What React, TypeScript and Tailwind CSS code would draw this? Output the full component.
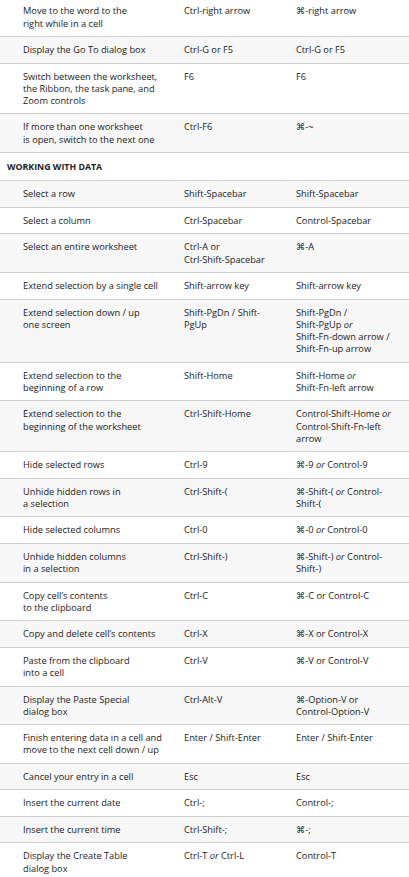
import React from 'react';

type Row = { a: string[]; b: string[]; c: string[] };

// rows of the shortcut table; "*or*" is printed in italics
const topRows: Row[] = [
  { a: ['Move to the word to the', 'right while in a cell'], b: ['Ctrl-right arrow'], c: ['⌘-right arrow'] },
  { a: ['Display the Go To dialog box'], b: ['Ctrl-G or F5'], c: ['Ctrl-G or F5'] },
  { a: ['Switch between the worksheet,', 'the Ribbon, the task pane, and', 'Zoom controls'], b: ['F6'], c: ['F6'] },
  { a: ['If more than one worksheet', 'is open, switch to the next one'], b: ['Ctrl-F6'], c: ['⌘-~'] },
];

const dataRows: Row[] = [
  { a: ['Select a row'], b: ['Shift-Spacebar'], c: ['Shift-Spacebar'] },
  { a: ['Select a column'], b: ['Ctrl-Spacebar'], c: ['Control-Spacebar'] },
  { a: ['Select an entire worksheet'], b: ['Ctrl-A or', 'Ctrl-Shift-Spacebar'], c: ['⌘-A'] },
  { a: ['Extend selection by a single cell'], b: ['Shift-arrow key'], c: ['Shift-arrow key'] },
  {
    a: ['Extend selection down / up', 'one screen'],
    b: ['Shift-PgDn / Shift-', 'PgUp'],
    c: ['Shift-PgDn /', 'Shift-PgUp *or*', 'Shift-Fn-down arrow /', 'Shift-Fn-up arrow'],
  },
  { a: ['Extend selection to the', 'beginning of a row'], b: ['Shift-Home'], c: ['Shift-Home *or*', 'Shift-Fn-left arrow'] },
  {
    a: ['Extend selection to the', 'beginning of the worksheet'],
    b: ['Ctrl-Shift-Home'],
    c: ['Control-Shift-Home *or*', 'Control-Shift-Fn-left', 'arrow'],
  },
  { a: ['Hide selected rows'], b: ['Ctrl-9'], c: ['⌘-9 *or* Control-9'] },
  { a: ['Unhide hidden rows in', 'a selection'], b: ['Ctrl-Shift-('], c: ['⌘-Shift-( *or* Control-', 'Shift-('] },
  { a: ['Hide selected columns'], b: ['Ctrl-0'], c: ['⌘-0 *or* Control-0'] },
  { a: ['Unhide hidden columns', 'in a selection'], b: ['Ctrl-Shift-)'], c: ['⌘-Shift-) *or* Control-', 'Shift-)'] },
  { a: ['Copy cell’s contents', 'to the clipboard'], b: ['Ctrl-C'], c: ['⌘-C or Control-C'] },
  { a: ['Copy and delete cell’s contents'], b: ['Ctrl-X'], c: ['⌘-X or Control-X'] },
  { a: ['Paste from the clipboard', 'into a cell'], b: ['Ctrl-V'], c: ['⌘-V or Control-V'] },
  { a: ['Display the Paste Special', 'dialog box'], b: ['Ctrl-Alt-V'], c: ['⌘-Option-V or', 'Control-Option-V'] },
  {
    a: ['Finish entering data in a cell and', 'move to the next cell down / up'],
    b: ['Enter / Shift-Enter'],
    c: ['Enter / Shift-Enter'],
  },
  { a: ['Cancel your entry in a cell'], b: ['Esc'], c: ['Esc'] },
  { a: ['Insert the current date'], b: ['Ctrl-;'], c: ['Control-;'] },
  { a: ['Insert the current time'], b: ['Ctrl-Shift-;'], c: ['⌘-;'] },
  { a: ['Display the Create Table', 'dialog box'], b: ['Ctrl-T *or* Ctrl-L'], c: ['Control-T'] },
];

function Line({ text }: { text: string }) {
  const parts = text.split('*or*');
  return (
    <div className="whitespace-nowrap">
      {parts.map((p, i) => (
        <React.Fragment key={i}>
          {p}
          {i < parts.length - 1 && <i>or</i>}
        </React.Fragment>
      ))}
    </div>
  );
}

function TableRow({ row, shaded, first }: { row: Row; shaded: boolean; first?: boolean }) {
  return (
    <div
      className={`grid grid-cols-[184px_112px_1fr] border-b border-[#cfcfcf] pb-[6.3px] ${first ? 'pt-[5.3px]' : 'pt-[7px]'} ${
        shaded ? 'bg-[#f7f7f7]' : 'bg-white'
      }`}
    >
      <div className="pl-[23px]">
        {row.a.map((t, i) => (
          <Line key={i} text={t} />
        ))}
      </div>
      <div>
        {row.b.map((t, i) => (
          <Line key={i} text={t} />
        ))}
      </div>
      <div>
        {row.c.map((t, i) => (
          <Line key={i} text={t} />
        ))}
      </div>
    </div>
  );
}

export default function App() {
  return (
    <div className="w-[409px] h-[877px] overflow-hidden bg-white text-[#1a1a1a] text-[9.25px] leading-[12.2px] font-['Open_Sans','DejaVu_Sans',sans-serif]">
      {topRows.map((r, i) => (
        <TableRow key={i} row={r} shaded={i % 2 === 1} first={i === 0} />
      ))}

      {/* section heading */}
      <div className="border-b border-[#cfcfcf] bg-white pl-[7px] pt-[8px] pb-[7px] text-[8.8px] font-bold text-[#222]">
        WORKING WITH DATA
      </div>

      {dataRows.map((r, i) => (
        <TableRow key={i} row={r} shaded={i % 2 === 0} />
      ))}
    </div>
  );
}
